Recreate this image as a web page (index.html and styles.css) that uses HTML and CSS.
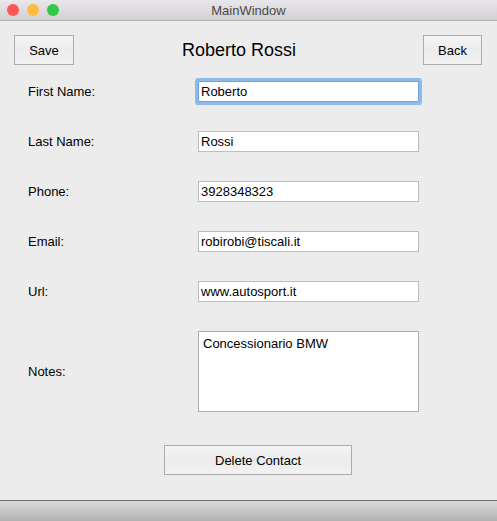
FILE: index.html
```html
<!DOCTYPE html>
<html>
<head>
<meta charset="utf-8">
<title>MainWindow</title>
<link rel="stylesheet" href="styles.css">
</head>
<body>
<div class="window">
  <div class="titlebar">
    <div class="lights">
      <span class="light red"></span>
      <span class="light yellow"></span>
      <span class="light green"></span>
    </div>
    <div class="wtitle">MainWindow</div>
  </div>
  <div class="main">
    <div class="toprow">
      <button class="btn save">Save</button>
      <div class="name">Roberto Rossi</div>
      <button class="btn back">Back</button>
    </div>
    <div class="form">
      <label class="lbl">First Name:</label>
      <div class="field focus">Roberto</div>
      <label class="lbl">Last Name:</label>
      <div class="field">Rossi</div>
      <label class="lbl">Phone:</label>
      <div class="field">3928348323</div>
      <label class="lbl">Email:</label>
      <div class="field">robirobi@tiscali.it</div>
      <label class="lbl">Url:</label>
      <div class="field">www.autosport.it</div>
      <label class="lbl">Notes:</label>
      <div class="field notes">Concessionario BMW</div>
    </div>
    <button class="btn delete">Delete Contact</button>
  </div>
  <div class="statusbar"></div>
</div>
</body>
</html>
```
FILE: styles.css
```css
html, body {
  margin: 0;
  padding: 0;
  height: 100%;
}
body {
  font-family: "Liberation Sans", Arial, sans-serif;
  font-size: 13px;
  color: #000;
  background: #ececec;
}
.window {
  display: flex;
  flex-direction: column;
  height: 521px;
}
.titlebar {
  height: 20px;
  border-bottom: 1px solid #b4b4b4;
  background: linear-gradient(#e9e7e9, #d2d0d2);
  position: relative;
  display: flex;
  align-items: center;
  justify-content: center;
}
.lights {
  position: absolute;
  left: 7px;
  top: 4px;
  display: flex;
  gap: 8px;
}
.light {
  width: 12px;
  height: 12px;
  border-radius: 50%;
  display: block;
}
.red { background: #fc5753; }
.yellow { background: #fdbc40; }
.green { background: #33c748; }
.wtitle {
  color: #4a4a4a;
  font-size: 13px;
}
.main {
  flex: 1;
  padding: 14px 14px 0 14px;
  display: flex;
  flex-direction: column;
  align-items: flex-start;
}
.toprow {
  align-self: stretch;
  display: flex;
  justify-content: space-between;
  align-items: center;
  height: 30px;
}
.btn {
  font-family: "Liberation Sans", Arial, sans-serif;
  font-size: 13px;
  color: #000;
  height: 30px;
  border: 1px solid #acacac;
  background: linear-gradient(#f4f4f4, #ececec 50%, #f2f2f2);
  padding: 0;
  margin: 0;
}
.save { width: 60px; }
.back { width: 59px; margin-right: 1px; }
.name {
  font-size: 18px;
  margin-left: -19px;
}
.form {
  margin-top: 16px;
  padding-left: 14px;
  display: grid;
  grid-template-columns: 170px 221px;
  row-gap: 29px;
  align-items: center;
}
.lbl {
  font-size: 13px;
}
.field {
  box-sizing: border-box;
  height: 21px;
  background: #fff;
  border: 1px solid #bdbdbd;
  padding: 0 2px;
  line-height: 19px;
  font-size: 13px;
  white-space: nowrap;
}
.field.focus {
  border-color: #6fa2dc;
  box-shadow: 0 0 0 3px #8ebbeb;
  border-radius: 1px;
}
.field.notes {
  height: 81px;
  border-color: #adadad;
  padding: 4px 4px;
  line-height: 16px;
}
.delete {
  width: 188px;
  margin-top: 33px;
  margin-left: 150px;
}
.statusbar {
  height: 20px;
  border-top: 1px solid #6e6e6e;
  background: linear-gradient(#dadada, #b2b2b2);
}
```
